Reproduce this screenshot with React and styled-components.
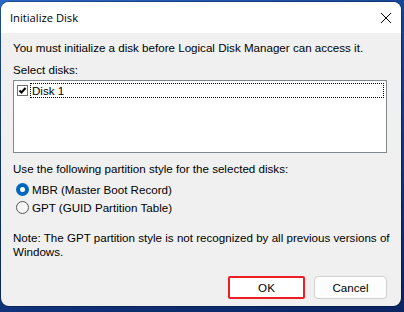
import React from 'react';
import styled, { createGlobalStyle } from 'styled-components';

const GlobalStyle = createGlobalStyle`
  html, body {
    margin: 0;
    padding: 0;
    width: 404px;
    height: 312px;
    overflow: hidden;
  }
  body {
    background: linear-gradient(160deg, #2a66c4 0%, #14408e 40%, #0b2461 100%);
    font-family: "Liberation Sans", Arial, sans-serif;
  }
`;

const Desktop = styled.div`
  width: 404px;
  height: 312px;
  box-sizing: border-box;
  padding: 2px 3px 6px 1px;
  display: flex;
`;

const Window = styled.div`
  flex: 1;
  display: flex;
  flex-direction: column;
  background: #f0f0f0;
  border-radius: 8px;
  overflow: hidden;
  box-shadow: 0 0 0 1px rgba(0, 0, 0, 0.25);
`;

const TitleBar = styled.div`
  height: 31px;
  background: #ffffff;
  display: flex;
  align-items: center;
  justify-content: space-between;
  padding: 0 9px 0 9px;
  flex-shrink: 0;
`;

const Title = styled.span`
  font-family: "Open Sans", "Liberation Sans", sans-serif;
  font-size: 11.2px;
  color: #000;
`;

const CloseButton = styled.span`
  width: 12px;
  height: 12px;
  display: flex;
`;

const Body = styled.div`
  flex: 1;
  display: flex;
  flex-direction: column;
  padding: 8px 14px 0 12px;
  font-size: 11.6px;
  color: #000;
`;

const Line = styled.div`
  height: 14px;
  line-height: 14px;
  white-space: nowrap;
  margin-top: ${(p) => p.$top || 0}px;
`;

const ListBox = styled.div`
  margin-top: 3px;
  height: 67px;
  background: #fff;
  border: 1px solid #828790;
  padding: 2px;
`;

const ListRow = styled.div`
  display: flex;
  align-items: center;
  height: 15px;
  gap: 2px;
`;

const Check = styled.span`
  width: 11px;
  height: 11px;
  box-sizing: border-box;
  border: 1px solid #707070;
  background: #fff;
  display: flex;
  margin-left: 1px;
`;

const FocusLabel = styled.span`
  flex: 1;
  height: 15px;
  box-sizing: border-box;
  border: 1px dotted #000;
  line-height: 13px;
  padding-left: 1px;
`;

const RadioRow = styled.div`
  display: flex;
  align-items: center;
  gap: 3px;
  height: 18px;
  padding-left: 3px;
  margin-top: ${(p) => p.$top || 0}px;
`;

const Radio = styled.span`
  width: 13px;
  height: 13px;
  box-sizing: border-box;
  border-radius: 50%;
  display: flex;
  align-items: center;
  justify-content: center;
  background: ${(p) => (p.$checked ? '#0067c0' : '#f5f5f5')};
  border: ${(p) => (p.$checked ? 'none' : '1px solid #555')};

  &::after {
    content: '';
    display: ${(p) => (p.$checked ? 'block' : 'none')};
    width: 5px;
    height: 5px;
    border-radius: 50%;
    background: #fff;
  }
`;

const Buttons = styled.div`
  margin-top: auto;
  display: flex;
  justify-content: flex-end;
  align-items: center;
  gap: 9px;
  padding: 0 0 7px 0;
`;

const Button = styled.button`
  width: ${(p) => (p.$marked ? 77 : 73)}px;
  height: 23px;
  box-sizing: border-box;
  font-family: "Liberation Sans", Arial, sans-serif;
  font-size: 11.6px;
  color: #000;
  background: ${(p) => (p.$marked ? '#fff' : '#fdfdfd')};
  border: ${(p) => (p.$marked ? '2px solid #ee1c24' : '1px solid #d0d0d0')};
  border-radius: ${(p) => (p.$marked ? 2 : 4)}px;
  padding: 0;
`;

const App = () => (
  <>
    <GlobalStyle />
    <Desktop>
      <Window>
        <TitleBar>
          <Title>Initialize Disk</Title>
          <CloseButton>
            <svg width="12" height="12" viewBox="0 0 12 12">
              <path d="M1 1L11 11M11 1L1 11" stroke="#000" strokeWidth="1" />
            </svg>
          </CloseButton>
        </TitleBar>
        <Body>
          <Line>You must initialize a disk before Logical Disk Manager can access it.</Line>
          <Line $top={8}>Select disks:</Line>
          <ListBox>
            <ListRow>
              <Check>
                <svg width="9" height="9" viewBox="0 0 9 9">
                  <path d="M1.5 4.5L3.5 6.5L7.5 2" stroke="#000" strokeWidth="2" fill="none" />
                </svg>
              </Check>
              <FocusLabel>Disk 1</FocusLabel>
            </ListRow>
          </ListBox>
          <Line $top={9}>Use the following partition style for the selected disks:</Line>
          <RadioRow $top={4}>
            <Radio $checked />
            MBR (Master Boot Record)
          </RadioRow>
          <RadioRow>
            <Radio />
            GPT (GUID Partition Table)
          </RadioRow>
          <Line $top={15}>Note: The GPT partition style is not recognized by all previous versions of</Line>
          <Line>Windows.</Line>
          <Buttons>
            <Button $marked>OK</Button>
            <Button>Cancel</Button>
          </Buttons>
        </Body>
      </Window>
    </Desktop>
  </>
);

export default App;
